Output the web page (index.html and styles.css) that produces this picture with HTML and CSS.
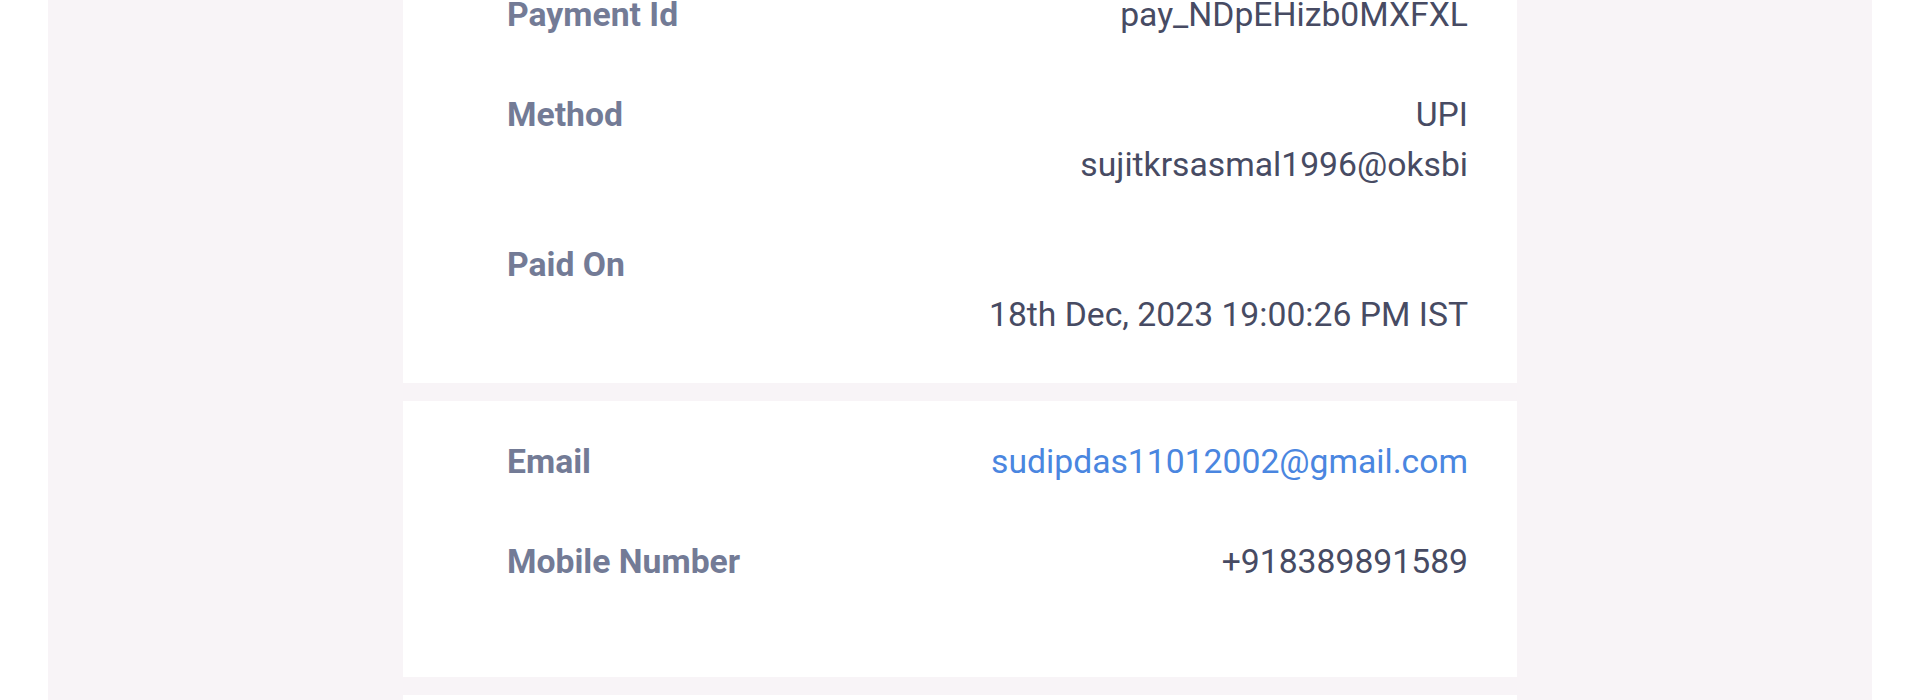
FILE: index.html
```html
<!DOCTYPE html>
<html lang="en">
<head>
<meta charset="utf-8">
<title>Payment Details</title>
<link rel="stylesheet" href="styles.css">
</head>
<body>
<div class="page">
  <div class="panel">
    <section class="card card-payment">
      <div class="row">
        <div class="label">Payment Id</div>
        <div class="value">pay_NDpEHizb0MXFXL</div>
      </div>
      <div class="row">
        <div class="label">Method</div>
        <div class="value">UPI<br>sujitkrsasmal1996@oksbi</div>
      </div>
      <div class="row">
        <div class="label">Paid On</div>
        <div class="value"><br>18th Dec, 2023 19:00:26 PM IST</div>
      </div>
    </section>
    <section class="card card-contact">
      <div class="row">
        <div class="label">Email</div>
        <div class="value"><a class="link" href="#">sudipdas11012002@gmail.com</a></div>
      </div>
      <div class="row">
        <div class="label">Mobile Number</div>
        <div class="value">+918389891589</div>
      </div>
    </section>
    <section class="card card-next"></section>
  </div>
</div>
</body>
</html>
```
FILE: styles.css
```css
html, body {
  margin: 0;
  padding: 0;
  background: #ffffff;
  height: 700px;
  overflow: hidden;
}

body {
  font-family: Roboto, "Liberation Sans", Arial, sans-serif;
  font-size: 33.7px;
  line-height: 50px;
}

.page {
  padding: 0 48px;
}

.panel {
  background: #f8f4f7;
  display: flex;
  flex-direction: column;
  align-items: center;
  gap: 18px;
  margin-top: -46px;
  min-height: 800px;
}

.card {
  background: #ffffff;
  width: 1114px;
  box-sizing: border-box;
  padding: 36px 49px 43px 104px;
  display: flex;
  flex-direction: column;
  gap: 50px;
}

.card-contact {
  padding-top: 36px;
  padding-bottom: 90px;
}

.card-next {
  height: 200px;
}

.row {
  display: flex;
  justify-content: space-between;
  align-items: flex-start;
}

.label {
  font-weight: 700;
  color: #737b96;
}

.value {
  color: #474b63;
  text-align: right;
}

.link {
  color: #4a86e0;
  text-decoration: none;
}
```
